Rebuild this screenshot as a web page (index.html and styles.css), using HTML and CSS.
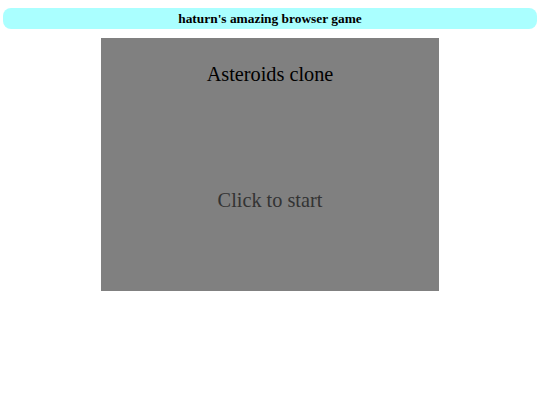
FILE: index.html
```html
<!DOCTYPE html>
<html>
<head>
<meta charset="utf-8">
<link rel="stylesheet" href="styles.css">
</head>
<body>
<header class="banner">haturn's amazing browser game</header>
<main class="stage">
  <div class="game">
    <div class="title">Asteroids clone</div>
    <div class="prompt">Click to start</div>
  </div>
</main>
</body>
</html>
```
FILE: styles.css
```css
html, body {
  margin: 0;
  padding: 0;
  background: #ffffff;
}
body {
  padding: 8px 3px 0 3px;
  font-family: "Liberation Serif", "Times New Roman", serif;
}
.banner {
  display: block;
  height: 21px;
  line-height: 21px;
  background: #aaffff;
  border-radius: 8px;
  text-align: center;
  font-weight: bold;
  font-size: 13.4px;
  color: #000000;
}
.stage {
  display: flex;
  justify-content: center;
  padding-top: 9px;
}
.game {
  width: 338px;
  height: 253px;
  background: #808080;
  display: flex;
  flex-direction: column;
  align-items: center;
}
.title {
  margin-top: 24px;
  font-size: 20.3px;
  line-height: 24px;
  color: #000000;
}
.prompt {
  margin-top: 102px;
  font-size: 20.3px;
  line-height: 24px;
  color: #333333;
}
```
